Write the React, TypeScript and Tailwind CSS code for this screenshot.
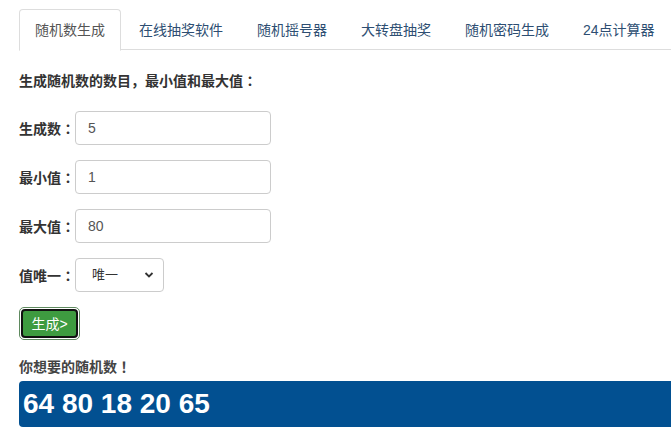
import React from "react";

const tabs = ["随机数生成", "在线抽奖软件", "随机摇号器", "大转盘抽奖", "随机密码生成", "24点计算器"];

function Colon() {
  return <span className="font-['Noto_Sans_CJK_JP',sans-serif]">：</span>;
}

function Row({ label, value }: { label: string; value: string }) {
  return (
    <div className="flex items-center h-[34px] mb-[15px]">
      <label className="w-[56px] text-[14px] font-bold text-[#333] leading-[20px] whitespace-nowrap">
        {label}
        <Colon />
      </label>
      <input
        readOnly
        value={value}
        className="w-[196px] h-[34px] border border-[#ccc] rounded-[4px] px-[12px] text-[14px] text-[#555] outline-none bg-white"
      />
    </div>
  );
}

export default function App() {
  return (
    <div className="w-[671px] h-[432px] overflow-hidden bg-white pl-[19px] pt-[9px] [text-spacing-trim:space-all] font-['Liberation_Sans','Noto_Sans_CJK_SC',Arial,sans-serif]">
      <ul className="flex border-b border-[#ddd] h-[41px]">
        {tabs.map((t, i) => (
          <li key={t} className="mr-[2px] -mb-px">
            <div
              className={
                i === 0
                  ? "h-[42px] px-[15px] py-[10px] border border-[#ddd] border-b-white bg-white rounded-t-[4px] text-[14px] leading-[20px] text-[#555] whitespace-nowrap"
                  : "h-[42px] px-[15px] py-[10px] border border-transparent text-[14px] leading-[20px] text-[#2d4e72] whitespace-nowrap"
              }
            >
              {t}
            </div>
          </li>
        ))}
      </ul>
      <div className="mt-[20px] text-[14px] font-bold text-[#333] leading-[20px] whitespace-nowrap">
        生成随机数的数目<span className="font-['Noto_Sans_CJK_JP',sans-serif]">，</span>最小值和最大值
        <Colon />
      </div>
      <div className="mt-[20px]">
        <Row label="生成数" value="5" />
        <Row label="最小值" value="1" />
        <Row label="最大值" value="80" />
        <div className="flex items-center h-[34px] mb-[15px]">
          <label className="w-[56px] text-[14px] font-bold text-[#333] leading-[20px] whitespace-nowrap">
            值唯一
            <Colon />
          </label>
          <div className="relative w-[89px] h-[34px]">
            <select
              className="appearance-none w-full h-full border border-[#ccc] rounded-[4px] pl-[16px] text-[13px] text-[#333] bg-white outline-none"
              defaultValue="1"
            >
              <option value="1">唯一</option>
              <option value="0">不唯一</option>
            </select>
            <svg className="absolute right-[10px] top-[13px] pointer-events-none" width="10" height="8" viewBox="0 0 10 8">
              <path d="M1.5 2 L5 5.5 L8.5 2" fill="none" stroke="#333" strokeWidth="1.8" />
            </svg>
          </div>
        </div>
      </div>
      <div className="w-[61px] h-[33px] rounded-[5px] border border-[#5f8a5f] p-px">
        <button className="w-full h-full rounded-[4px] border-2 border-[#111] bg-[#3e9b40] text-white text-[14px] leading-[20px]">
          生成&gt;
        </button>
      </div>
      <div className="mt-[16px] text-[14px] font-bold text-[#444] leading-[20px] whitespace-nowrap">
        你想要的随机数<span className="font-['Noto_Sans_CJK_JP',sans-serif]">！</span>
      </div>
      <div className="mt-[4px] h-[46px] bg-[#025091] rounded-l-[4px] pl-[4px] flex items-center">
        <span className="text-white font-bold text-[28px] leading-none font-['Liberation_Sans',Arial,sans-serif]">
          64 80 18 20 65
        </span>
      </div>
    </div>
  );
}
